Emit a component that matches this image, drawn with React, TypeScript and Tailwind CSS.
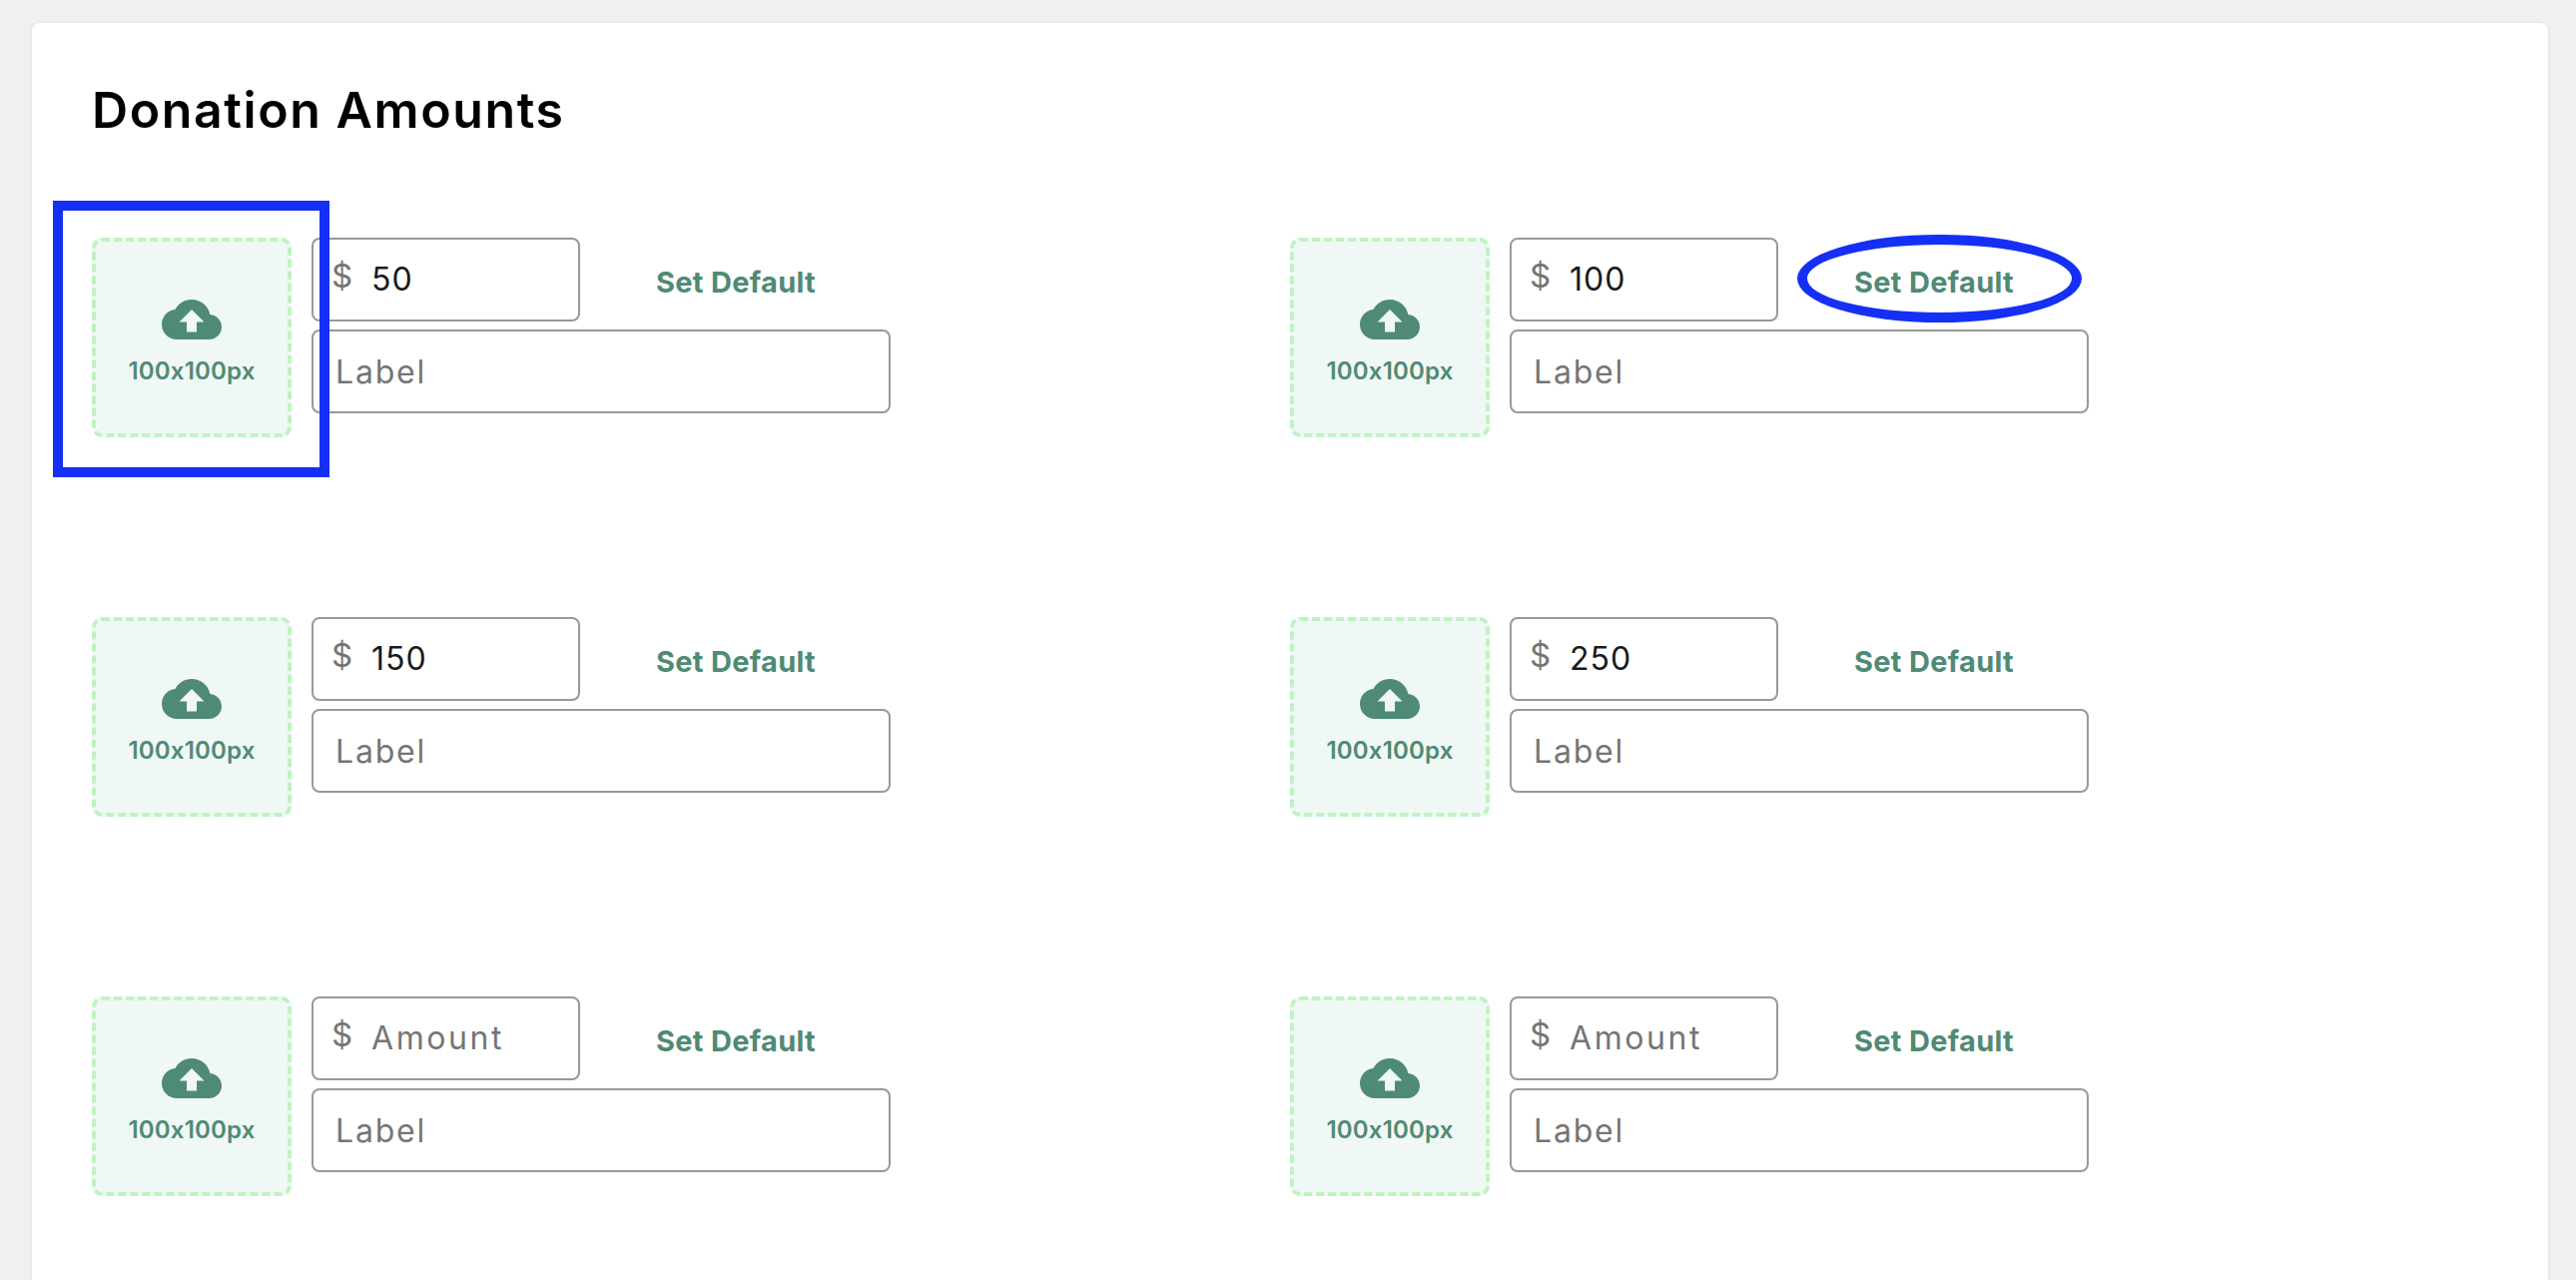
import React from "react";

const amounts = ["50", "100", "150", "250", "", ""];

const CloudUpload = () => (
  <svg viewBox="0 0 24 24" className="h-[60px] w-[60px] fill-[#4f8a75]">
    <path d="M19.35 10.04C18.67 6.59 15.64 4 12 4 9.11 4 6.6 5.64 5.35 8.04 2.34 8.36 0 10.91 0 14c0 3.31 2.69 6 6 6h13c2.76 0 5-2.24 5-5 0-2.64-2.05-4.78-4.65-4.96zM14 13v4h-4v-4H7l5-5 5 5h-3z" />
  </svg>
);

const AmountRow: React.FC<{ amount: string; index: number }> = ({ amount, index }) => {
  return (
    <div className="relative flex h-[200px] w-[1200px] gap-5">
      <div className="flex h-[200px] w-[200px] flex-col items-center justify-center gap-[7px] rounded-[10px] border-4 border-dashed border-[#bff3bf] bg-[#eff8f5]">
        <CloudUpload />
        <span className="text-[24px] leading-[30px] font-semibold tracking-[0.2px] text-[#4f8a75]">100x100px</span>
      </div>
      <div className="flex w-[580px] flex-col gap-2">
        <div className="flex items-center">
          <div className="flex h-[84px] w-[269px] items-center rounded-lg border-2 border-[#999999] pl-[18px]">
            <span className="mt-[-8px] w-10 shrink-0 text-[33px] leading-none text-[#757575]">$</span>
            <input
              readOnly
              value={amount}
              placeholder="Amount"
              className="w-[190px] min-w-0 text-[32px] tracking-[1px] text-[#1a1a1a] outline-none placeholder:tracking-[2.6px] placeholder:text-[#757575]"
            />
          </div>
          <button className="mt-[5px] ml-[76px] text-[29px] leading-none font-bold tracking-[0.3px] whitespace-nowrap text-[#4f8a75]">
            Set Default
          </button>
        </div>
        <input
          readOnly
          placeholder="Label"
          className="h-[84px] w-[580px] rounded-lg border-2 border-[#999999] pl-[22px] text-[32px] tracking-[1.8px] outline-none placeholder:text-[#757575]"
        />
      </div>
      {index === 0 && (
        <div className="absolute top-[-37px] left-[-39px] h-[277px] w-[277px] border-10 border-[#1530f5]" />
      )}
      {index === 1 && (
        <div className="absolute top-[-3px] left-[508px] h-[88px] w-[285px] rounded-[50%] border-[10px] border-[#1530f5]" />
      )}
    </div>
  );
};

export default function App() {
  return (
    <div className="h-[1282px] overflow-hidden bg-[#f0f0f0] pt-[23px] pl-8 font-[Inter,sans-serif]">
      <div className="h-[1300px] w-[2520px] rounded-lg bg-white pt-[58px] pl-[60px] shadow-[0_0_4px_rgba(0,0,0,0.08)]">
        <h1 className="mb-[99px] text-[50px] leading-[58px] font-semibold tracking-[1.6px] text-black">Donation Amounts</h1>
        <div className="grid grid-cols-[1200px_1200px] gap-y-[180px]">
          {amounts.map((amount, i) => (
            <AmountRow key={i} amount={amount} index={i} />
          ))}
        </div>
      </div>
    </div>
  );
}
